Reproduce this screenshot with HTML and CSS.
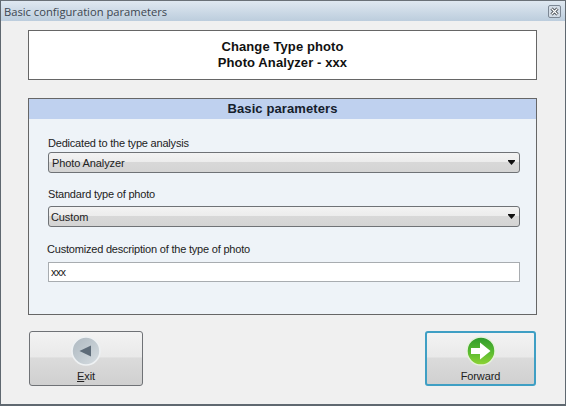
FILE: index.html
```html
<!DOCTYPE html>
<html lang="en">
<head>
    <meta charset="UTF-8">
    <title>Basic configuration parameters</title>
    <link rel="stylesheet" href="styles.css">
</head>
<body>
<div class="window">
    <div class="title-bar">
        <span class="title-text">Basic configuration parameters</span>
        <span class="close-btn">
            <svg width="9" height="9" viewBox="0 0 9 9">
                <path d="M1.500 1.500 L7.500 7.500 M7.500 1.500 L1.500 7.500" stroke="#3a4048" stroke-width="3" fill="none"/>
                <path d="M1.500 1.500 L7.500 7.500 M7.500 1.500 L1.500 7.500" stroke="#fff" stroke-width="1.200" fill="none"/>
            </svg>
        </span>
    </div>

    <div class="content">
        <div class="header-box">
            <div>Change Type photo</div>
            <div>Photo Analyzer - xxx</div>
        </div>

        <div class="panel">
            <div class="panel-title">Basic parameters</div>
            <div class="panel-body">
                <div class="field">
                    <div class="field-label">Dedicated to the type analysis</div>
                    <div class="combo">
                        <span>Photo Analyzer</span>
                        <svg class="combo-arrow" width="7" height="5" viewBox="0 0 7 5"><path d="M0 0 H7 V1 L3.500 5 L0 1 Z" fill="#111"/></svg>
                    </div>
                </div>
                <div class="field">
                    <div class="field-label">Standard type of photo</div>
                    <div class="combo combo-spaced">
                        <span>Custom</span>
                        <svg class="combo-arrow" width="7" height="5" viewBox="0 0 7 5"><path d="M0 0 H7 V1 L3.500 5 L0 1 Z" fill="#111"/></svg>
                    </div>
                </div>
                <div class="field">
                    <div class="field-label label-tight">Customized description of the type of photo</div>
                    <div class="text-box">xxx</div>
                </div>
            </div>
        </div>

        <div class="actions">
            <div class="action-btn">
                <svg class="action-icon" width="30" height="30" viewBox="0 0 30 30">
                    <defs>
                        <linearGradient id="greyFill" x1="0" y1="0" x2="1" y2="1">
                            <stop offset="0" stop-color="#aeb8c0"/>
                            <stop offset="0.55" stop-color="#c3ccd2"/>
                            <stop offset="1" stop-color="#d8dee2"/>
                        </linearGradient>
                    </defs>
                    <circle cx="15" cy="15" r="14" fill="url(#greyFill)" stroke="#eef1f3" stroke-width="1.600"/>
                    <path d="M8.500 15 L20 9.500 V20.500 Z" fill="#5d6b78"/>
                </svg>
                <span class="action-label"><u>E</u>xit</span>
            </div>
            <div class="action-btn action-default">
                <svg class="action-icon" width="30" height="30" viewBox="0 0 30 30">
                    <defs>
                        <linearGradient id="greenFill" x1="0" y1="0" x2="0" y2="1">
                            <stop offset="0" stop-color="#2f9a2c"/>
                            <stop offset="0.5" stop-color="#55b82f"/>
                            <stop offset="1" stop-color="#8fd435"/>
                        </linearGradient>
                    </defs>
                    <circle cx="15" cy="15" r="14" fill="url(#greenFill)" stroke="#e6f2dc" stroke-width="1.400"/>
                    <path d="M5 12 H14 V6.500 L24.500 15 L14 23.500 V18 H5 Z" fill="#fff"/>
                </svg>
                <span class="action-label">Forward</span>
            </div>
        </div>
    </div>
</div>
</body>
</html>
```

FILE: styles.css
```css
* {
    box-sizing: border-box;
}

html, body {
    margin: 0;
    height: 100%;
}

body {
    font-family: "Liberation Sans", Arial, sans-serif;
    font-size: 12px;
    color: #1a1a1a;
    background-color: #f0f0f0;
}

.window {
    width: 566px;
    height: 406px;
    display: flex;
    flex-direction: column;
    border: 1px solid #5f6870;
    border-top-color: #6a7178;
    border-bottom-width: 2px;
}

.title-bar {
    height: 20px;
    flex: none;
    display: flex;
    align-items: center;
    justify-content: space-between;
    padding: 0 4px 0 3px;
    background: linear-gradient(to bottom, #dfe8f1, #bccddd);
}

.title-text {
    font-family: "Open Sans", "Noto Sans", sans-serif;
    font-size: 11.200px;
    color: #3c4650;
}

.close-btn {
    width: 13px;
    height: 13px;
    display: flex;
    align-items: center;
    justify-content: center;
    border: 1px solid #7c8794;
    border-radius: 2px;
    background-color: #d3dce6;
}

.content {
    flex: 1;
    padding: 9px 28px 0 27px;
    display: flex;
    flex-direction: column;
}

.header-box {
    height: 50px;
    display: flex;
    flex-direction: column;
    justify-content: center;
    align-items: center;
    background-color: #fff;
    border: 1px solid #666;
    font-size: 13px;
    font-weight: bold;
    letter-spacing: 0.1px;
    line-height: 16px;
    color: #111;
}

.panel {
    height: 217px;
    margin-top: 18px;
    border: 1px solid #666;
    background-color: #eef3f8;
}

.panel-title {
    height: 20px;
    line-height: 20px;
    text-align: center;
    font-size: 13px;
    font-weight: bold;
    letter-spacing: 0.1px;
    color: #15202c;
    background-color: #bfd1ef;
}

.panel-body {
    padding: 17px 16px 0 19px;
}

.field {
    margin-bottom: 14px;
}

.field-label {
    height: 15px;
    line-height: 15px;
    font-size: 11px;
    color: #222;
    letter-spacing: -0.2px;
}

/* last label sits one pixel left, with the box further down */
.label-tight {
    margin-top: 15px;
    margin-left: -1px;
    margin-bottom: 5px;
}

.combo {
    height: 21px;
    margin-top: 1px;
    display: flex;
    align-items: center;
    justify-content: space-between;
    padding: 0 4px 0 3px;
    border: 1px solid #6f7276;
    border-radius: 3px;
    background: linear-gradient(to bottom, #f3f3f3 0%, #ececec 48%, #d8d8d8 50%, #d4d4d4 100%);
    font-size: 11px;
    letter-spacing: -0.1px;
    color: #222;
}

.combo-spaced {
    margin-top: 4px;
    padding-left: 2px;
}

.combo-arrow {
    flex: none;
}

.text-box {
    height: 20px;
    line-height: 18px;
    padding-left: 2px;
    background-color: #fff;
    border: 1px solid #a8acb0;
    font-size: 11px;
    letter-spacing: -0.7px;
    color: #222;
}

.actions {
    margin-top: 16px;
    padding: 0 1px;
    display: flex;
    justify-content: space-between;
}

.action-btn {
    width: 114px;
    height: 55px;
    display: flex;
    flex-direction: column;
    align-items: center;
    padding-top: 4px;
    border: 1px solid #6f7276;
    border-radius: 3px;
    background: linear-gradient(to bottom, #f3f3f3 0%, #e9e9e9 47%, #dbdbdb 49%, #d0d0d0 100%);
}

.action-default {
    width: 111px;
    border: 2px solid #3f9fc4;
    padding-top: 3px;
}

.action-icon {
    flex: none;
}

.action-label {
    margin-top: 3px;
    font-size: 11px;
    line-height: 14px;
    letter-spacing: -0.1px;
    color: #222;
}
```
